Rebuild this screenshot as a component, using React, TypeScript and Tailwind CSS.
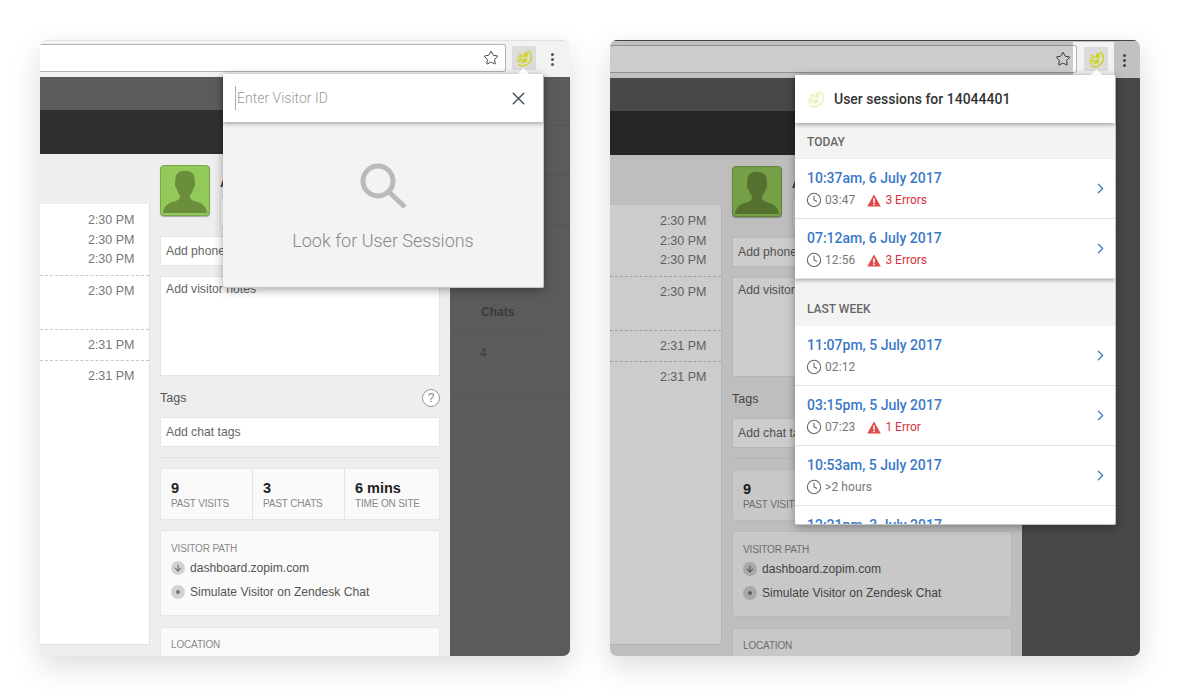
import React from 'react';
import { ArrowDown, ChevronRight, Clock, Star, X } from 'lucide-react';

const LimeLogo: React.FC<{ className?: string }> = ({ className }) => (
  <svg viewBox="0 0 18 18" className={className} fill="none" stroke="#cdd428">
    <path d="M13.5 1.2C17.2 5 17.2 10.5 13.8 13.8C10.8 16.8 6.5 17.2 3.2 15.6" strokeWidth="1.6" strokeLinecap="round" />
    <path d="M8.6 3L12.6 1.8L12.2 7.6H7.8Z" fill="#cdd428" stroke="none" />
    <path d="M7.4 8.9H12.1L10.8 13L6 14.2Z" fill="#cdd428" stroke="none" />
    <path d="M2.6 7.4H6.2M3.6 4.6L6.6 6M1.6 10H5.6M2 12.8L5.2 11.6" strokeWidth="1.5" strokeLinecap="round" />
  </svg>
);

const Warning: React.FC = () => (
  <svg viewBox="0 0 14 13" className="w-[14px] h-[13px]">
    <path d="M7 0.5L13.8 12.5H0.2Z" fill="#df4b4b" />
    <rect x="6.2" y="4.4" width="1.6" height="4.3" fill="#fff" />
    <rect x="6.2" y="9.6" width="1.6" height="1.6" fill="#fff" />
  </svg>
);

const Toolbar: React.FC<{ dimmed?: boolean }> = ({ dimmed }) => (
  <div className={`flex items-start shrink-0 bg-[#f2f2f2] ${dimmed ? 'h-[38px] pt-[5px]' : 'h-[37px] pt-[3px] border-t border-[#e2e2e2]'}`}>
    <div className={`h-[28px] bg-white border border-l-0 border-[#b4b4b4] rounded-r-[3px] flex items-center justify-end pr-[6px] ${dimmed ? 'w-[468px]' : 'w-[466px]'}`}>
      <Star size={16} strokeWidth={1.5} className="text-[#444]" />
    </div>
    <div className="ml-[6px] mt-[2px] w-[24px] h-[24px] rounded-[2px] bg-[#dcdcdc] flex items-center justify-center">
      <LimeLogo className="w-[17px] h-[17px]" />
    </div>
    <div className="ml-[15px] mt-[9px] flex flex-col gap-[2px]">
      <span className="w-[3px] h-[3px] rounded-full bg-[#555]" />
      <span className="w-[3px] h-[3px] rounded-full bg-[#555]" />
      <span className="w-[3px] h-[3px] rounded-full bg-[#555]" />
    </div>
  </div>
);

const TIMES = [
  { time: ['2:30 PM', '2:30 PM', '2:30 PM'], h: 'h-[71px] pt-[7px] leading-[19.5px]' },
  { time: ['2:30 PM'], h: 'h-[54px] pt-[6px] leading-[19px] border-t border-dashed border-[#c8c8c8]' },
  { time: ['2:31 PM'], h: 'h-[31px] pt-[6px] leading-[19px] border-t border-dashed border-[#c8c8c8]' },
  { time: ['2:31 PM'], h: 'pt-[6px] leading-[19px] border-t border-dashed border-[#c8c8c8]' },
];

const Field: React.FC<{ label: string; className?: string }> = ({ label, className }) => (
  <div className={`bg-white border border-[#e4e4e4] px-[5px] text-[12.2px] text-[#666] ${className ?? ''}`}>{label}</div>
);

const Stat: React.FC<{ value: string; label: string; className?: string }> = ({ value, label, className }) => (
  <div className={`pl-[10px] pt-[11px] ${className ?? ''}`}>
    <div className="text-[14.5px] font-bold leading-[17px] text-[#222]">{value}</div>
    <div className="text-[10px] leading-[13px] tracking-[-0.15px] text-[#888]">{label}</div>
  </div>
);

const Card: React.FC<{ className?: string; children: React.ReactNode }> = ({ className, children }) => (
  <div className={`bg-[#fafafa] border border-[#e6e6e6] rounded-[3px] ${className ?? ''}`}>{children}</div>
);

const PathRow: React.FC<{ label: string; dot?: boolean }> = ({ label, dot }) => (
  <div className="flex items-center gap-[5px] h-[16px] text-[12.1px] text-[#555]">
    <span className="w-[14px] h-[14px] rounded-full bg-[#d2d2d2] flex items-center justify-center">
      {dot ? (
        <span className="w-[4px] h-[4px] rounded-full bg-[#777]" />
      ) : (
        <ArrowDown size={10} strokeWidth={2.5} className="text-[#666]" />
      )}
    </span>
    {label}
  </div>
);

const Dashboard: React.FC<{ wide?: boolean }> = ({ wide }) => (
  <div className="flex flex-1 min-h-0 font-['Liberation_Sans',Arial,sans-serif]">
    <div className={`flex flex-col shrink-0 ${wide ? 'w-[412px]' : 'w-[410px]'}`}>
      <div className="h-[33px] shrink-0 bg-[#5b5b5b]" />
      <div className="h-[44px] shrink-0 bg-[#303030]" />
      <div className="flex-1 min-h-0 bg-[#eeeeee] flex gap-[10px] overflow-hidden">
        <div className={`shrink-0 mt-[50px] mb-[11px] bg-white border-r border-b border-[#e2e2e2] text-right text-[12.5px] text-[#777] ${wide ? 'w-[112px]' : 'w-[110px]'}`}>
          {TIMES.map((group, i) => (
            <div key={i} className={`pr-[14.5px] ${group.h}`}>
              {group.time.map((t, j) => (
                <div key={j}>{t}</div>
              ))}
            </div>
          ))}
        </div>
        <div className="w-[280px] shrink-0 pt-[11px]">
          <div className="flex h-[51px] gap-[10px]">
            <div className="w-[50px] h-[51px] rounded-[4px] border border-[#7da64c] bg-[#93c959] overflow-hidden shadow-[0_1px_1px_rgba(0,0,0,0.3)]">
              <svg viewBox="0 0 50 51" className="w-full h-full">
                <path
                  d="M25 5C19 5 15 8 15 13C15 15 14.5 17 14.5 19C14.5 21 15 22.5 16 23C17 27 19 30 20 31C20 34 18 36 14 37C8 38.5 3 41 2 49H48C47 41 42 38.5 36 37C32 36 30 34 30 31C31 30 33 27 34 23C35 22.5 35.5 21 35.5 19C35.5 17 35 15 35 13C35 8 31 5 25 5Z"
                  fill="#6a8e3c"
                />
              </svg>
            </div>
            <div className="flex-1">
              <div className="text-[13px] font-bold leading-[20px] pt-[8px] text-[#333]">A</div>
              <div className="mt-[4px] w-[220px] h-[30px] border border-[#e4e4e4] bg-white" />
            </div>
          </div>
          <Field label="Add phone" className="mt-[20px] h-[30px] leading-[28px]" />
          <Field label="Add visitor notes" className="mt-[10px] h-[100px] leading-[24px]" />
          <div className="mt-[12px] h-[20px] flex items-center justify-between text-[12.5px] text-[#555]">
            Tags
            <span className="w-[18px] h-[18px] rounded-full border border-[#999] bg-white text-center text-[12px] leading-[16px] text-[#888]">?</span>
          </div>
          <Field label="Add chat tags" className="mt-[9px] h-[30px] leading-[28px]" />
          <div className="mt-[10px] h-px bg-[#e2e2e2]" />
          <Card className="mt-[10px] h-[52px] flex">
            <Stat value="9" label="PAST VISITS" className="w-[92px] border-r border-[#e4e4e4]" />
            <Stat value="3" label="PAST CHATS" className="w-[92px] border-r border-[#e4e4e4]" />
            <Stat value="6 mins" label="TIME ON SITE" className="flex-1" />
          </Card>
          <Card className="mt-[10px] h-[86px] pl-[10px] pt-[11px]">
            <div className="text-[10px] leading-[13px] tracking-[-0.15px] text-[#888]">VISITOR PATH</div>
            <div className="mt-[5px] flex flex-col gap-[8px]">
              <PathRow label="dashboard.zopim.com" />
              <PathRow label="Simulate Visitor on Zendesk Chat" dot />
            </div>
          </Card>
          <Card className="mt-[11px] h-[60px] pl-[10px] pt-[10px]">
            <div className="text-[10px] leading-[13px] tracking-[-0.15px] text-[#888]">LOCATION</div>
          </Card>
        </div>
      </div>
    </div>
    <div className="flex-1 bg-[#5b5b5b]">
      <div className="h-[49px] border-b border-[#555]" />
      <div className="h-[50px] border-b border-[#555]" />
      <div className="h-[50px] border-b border-[#555]" />
      <div className="h-[107px] mr-[30px] border-b border-[#555] flex items-end pl-[31px] pb-[13px] text-[12px] font-bold leading-[14px] text-[#3a3a3a]">Chats</div>
      <div className="h-[64px] border-b border-[#555] pl-[30px] pt-[11px] text-[12px] text-[#3a3a3a]">4</div>
    </div>
  </div>
);

const Arrow: React.FC<{ className: string }> = ({ className }) => (
  <span className={`absolute w-[9px] h-[9px] bg-white rotate-45 ${className}`} />
);

const SearchPopup: React.FC = () => (
  <div className="absolute left-[183px] top-[34px] w-[321px] h-[214px] font-['Roboto',sans-serif] rounded-[2px] bg-[#f3f3f3] border-r border-b border-[#c4c4c4] shadow-[0_2px_10px_rgba(0,0,0,0.35)]">
    <Arrow className="right-[15px] top-[-4px]" />
    <div className="relative h-[48px] bg-white flex items-center pl-[12px] pr-[14px] shadow-[0_2px_4px_rgba(0,0,0,0.3)]">
      <span className="w-px h-[24px] bg-[#aaa]" />
      <span className="ml-px pt-px text-[14px] font-light text-[#9a9a9a]">Enter Visitor ID</span>
      <X size={21} strokeWidth={1.6} className="ml-auto text-[#3d4a55]" />
    </div>
    <div className="flex flex-col items-center pt-[40px]">
      <svg viewBox="0 0 48 48" className="w-[48px] h-[48px]" fill="none" stroke="#bababa" strokeWidth="5">
        <circle cx="19" cy="19" r="15" />
        <path d="M30 30L46 45" />
      </svg>
      <div className="mt-[19px] text-[18px] font-light leading-[24px] text-[#888]">Look for User Sessions</div>
    </div>
  </div>
);

type Session = { time: string; duration?: string; errors?: string };

const SessionRow: React.FC<{ session: Session }> = ({ session }) => (
  <div className="h-[60px] shrink-0 border-b border-[#e2e2e2] pl-[12px] pr-[6px] pt-[9px] flex items-start justify-between">
    <div>
      <div className="text-[14px] font-medium leading-[20px] text-[#3a79c8]">{session.time}</div>
      {session.duration && (
        <div className="mt-[4px] flex items-center text-[12px] leading-[15px] text-[#777]">
          <Clock size={16} strokeWidth={1.6} className="text-[#666] -ml-[1px] mr-[3px]" />
          <span className="tracking-[0.1px]">{session.duration}</span>
          {session.errors && (
            <span className="ml-[12px] flex items-center gap-[4px] text-[#d8323c]">
              <Warning />
              {session.errors}
            </span>
          )}
        </div>
      )}
    </div>
    <ChevronRight size={17} strokeWidth={1.7} className="self-center -mt-[9px] text-[#3a79c8]" />
  </div>
);

const SectionLabel: React.FC<{ label: string; className: string }> = ({ label, className }) => (
  <div className={`shrink-0 bg-[#f3f3f3] pl-[12px] flex items-end text-[12px] font-medium leading-[16px] text-[#666] ${className}`}>{label}</div>
);

const TODAY: Session[] = [
  { time: '10:37am, 6 July 2017', duration: '03:47', errors: '3 Errors' },
  { time: '07:12am, 6 July 2017', duration: '12:56', errors: '3 Errors' },
];

const LAST_WEEK: Session[] = [
  { time: '11:07pm, 5 July 2017', duration: '02:12' },
  { time: '03:15pm, 5 July 2017', duration: '07:23', errors: '1 Error' },
  { time: '10:53am, 5 July 2017', duration: '>2 hours' },
  { time: '12:21pm, 3 July 2017' },
];

const SessionsPopup: React.FC = () => (
  <div className="absolute left-[185px] top-[35px] w-[321px] h-[450px] font-['Roboto',sans-serif] rounded-[2px] bg-white border-r border-b border-[#c4c4c4] shadow-[0_2px_10px_rgba(0,0,0,0.35)] flex flex-col">
    <Arrow className="right-[14px] top-[-4px]" />
    <div className="relative z-10 h-[48px] shrink-0 bg-white flex items-center pl-[12px] shadow-[0_2px_4px_rgba(0,0,0,0.3)]">
      <LimeLogo className="w-[18px] h-[18px] opacity-30" />
      <span className="ml-[9px] text-[14px] font-medium text-[#333]">User sessions for 14044401</span>
    </div>
    <div className="flex-1 min-h-0 overflow-hidden flex flex-col">
      <SectionLabel label="TODAY" className="h-[36px] pb-[9px]" />
      <div className="shrink-0 shadow-[0_2px_3px_rgba(0,0,0,0.25)] relative">
        {TODAY.map((s) => (
          <SessionRow key={s.time} session={s} />
        ))}
      </div>
      <SectionLabel label="LAST WEEK" className="h-[47px] pb-[9px]" />
      {LAST_WEEK.map((s) => (
        <SessionRow key={s.time} session={s} />
      ))}
    </div>
  </div>
);

export default function App() {
  return (
    <div className="w-[1180px] h-[696px] bg-white flex gap-[40px] pt-[40px] pl-[40px] overflow-hidden">
      <div className="relative w-[530px] h-[616px] rounded-[7px] overflow-hidden flex flex-col shadow-[0_10px_30px_rgba(0,0,0,0.14)]">
        <Toolbar />
        <Dashboard />
        <SearchPopup />
      </div>
      <div className="relative w-[530px] h-[616px] rounded-[7px] overflow-hidden flex flex-col shadow-[0_10px_30px_rgba(0,0,0,0.14)]">
        <Toolbar dimmed />
        <Dashboard wide />
        <div className="absolute inset-0 bg-black/20 border-t border-[#444]" />
        <div className="absolute right-[26px] top-[2px] w-[41px] h-[36px] bg-[#f2f2f2]">
          <div className="absolute left-0 top-[3px] w-[4px] h-[28px] bg-white border border-l-0 border-[#b4b4b4] rounded-r-[3px]" />
          <div className="absolute left-[11px] top-[5px] w-[24px] h-[24px] rounded-[2px] bg-[#dcdcdc] flex items-center justify-center">
            <LimeLogo className="w-[17px] h-[17px]" />
          </div>
        </div>
        <SessionsPopup />
      </div>
    </div>
  );
}
